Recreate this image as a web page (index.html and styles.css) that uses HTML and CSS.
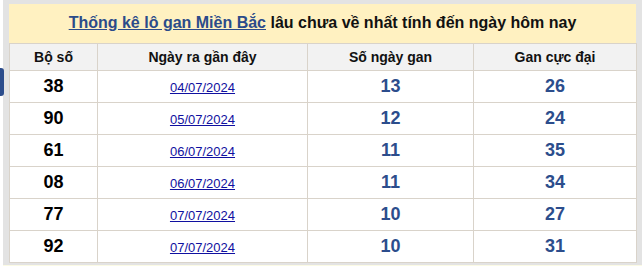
FILE: index.html
```html
<!DOCTYPE html>
<html lang="vi">
<head>
<meta charset="utf-8">
<title>Thống kê lô gan Miền Bắc</title>
<link rel="stylesheet" href="styles.css">
</head>
<body>
<div class="page">
  <span class="side-tab"></span>
  <div class="panel">
    <div class="title"><a href="#" class="title-link">Thống kê lô gan Miền Bắc</a> lâu chưa về nhất tính đến ngày hôm nay</div>
    <table class="stats">
      <colgroup>
        <col class="c1"><col class="c2"><col class="c3"><col class="c4">
      </colgroup>
      <thead>
        <tr><th>Bộ số</th><th>Ngày ra gần đây</th><th>Số ngày gan</th><th>Gan cực đại</th></tr>
      </thead>
      <tbody>
        <tr><td class="num">38</td><td><a href="#" class="date">04/07/2024</a></td><td class="val">13</td><td class="val">26</td></tr>
        <tr><td class="num">90</td><td><a href="#" class="date">05/07/2024</a></td><td class="val">12</td><td class="val">24</td></tr>
        <tr><td class="num">61</td><td><a href="#" class="date">06/07/2024</a></td><td class="val">11</td><td class="val">35</td></tr>
        <tr><td class="num">08</td><td><a href="#" class="date">06/07/2024</a></td><td class="val">11</td><td class="val">34</td></tr>
        <tr><td class="num">77</td><td><a href="#" class="date">07/07/2024</a></td><td class="val">10</td><td class="val">27</td></tr>
        <tr><td class="num">92</td><td><a href="#" class="date">07/07/2024</a></td><td class="val">10</td><td class="val">31</td></tr>
      </tbody>
    </table>
  </div>
  <div class="bottom-strip"></div>
</div>
</body>
</html>
```
FILE: styles.css
```css
html, body {
  margin: 0;
  padding: 0;
  background: #ffffff;
}
body {
  font-family: "Liberation Sans", Arial, sans-serif;
  color: #000;
}
.page {
  position: relative;
  width: 642px;
  height: 266px;
  overflow: hidden;
}
.side-tab {
  position: absolute;
  left: 0;
  top: 68px;
  width: 4px;
  height: 28px;
  background: #2c4d8c;
  border-radius: 0 3px 3px 0;
}
.panel {
  margin-left: 3px;
  background: #e3e3e3;
  padding: 4px 6px 2px 6px;
}
.title {
  background: #fff1c1;
  height: 39px;
  line-height: 38px;
  text-align: center;
  font-size: 16px;
  font-weight: bold;
  color: #111;
}
.title-link {
  color: #2b4b8a;
  text-decoration: underline;
}
.stats {
  width: 627px;
  border-collapse: collapse;
  table-layout: fixed;
  background: #ffffff;
}
.c1 { width: 88px; }
.c2 { width: 210px; }
.c3 { width: 166px; }
.c4 { width: 163px; }
.stats th, .stats td {
  border: 1px solid #d9d3ca;
  text-align: center;
  padding: 0;
}
.stats th {
  background: #f2f2f2;
  height: 26px;
  font-size: 14px;
  font-weight: bold;
  color: #111;
}
.stats td {
  height: 31px;
}
.num {
  font-size: 18px;
  font-weight: bold;
  color: #000;
}
.val {
  font-size: 18px;
  font-weight: bold;
  color: #2c4d8c;
}
.date {
  font-size: 13px;
  color: #1010a0;
  text-decoration: underline;
}
.bottom-strip {
  height: 4px;
  background: #fbfae4;
  margin-left: 3px;
}
```
